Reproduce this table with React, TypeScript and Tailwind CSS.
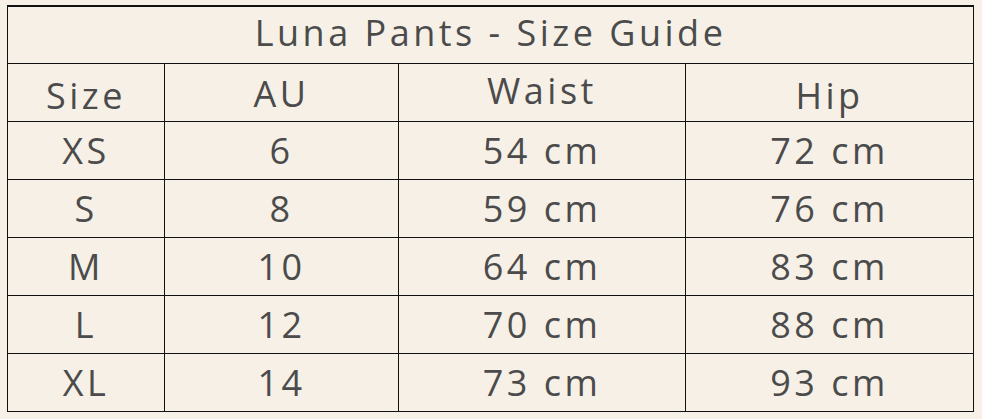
const rows = [
  ["XS", "6", "54 cm", "72 cm"],
  ["S", "8", "59 cm", "76 cm"],
  ["M", "10", "64 cm", "83 cm"],
  ["L", "12", "70 cm", "88 cm"],
  ["XL", "14", "73 cm", "93 cm"],
];

export default function App() {
  return (
    <div className="h-[419px] w-[982px] bg-[#f6f0e7] pl-[7px] pt-[5px] font-['Open_Sans',sans-serif] text-[36px] tracking-[3.5px] text-[#4b4b4b]">
      <table className="w-[966px] table-fixed border-collapse border-t-2 border-[#111]">
        <colgroup>
          <col className="w-[157px]" />
          <col className="w-[234px]" />
          <col className="w-[287px]" />
          <col className="w-[288px]" />
        </colgroup>
        <thead>
          <tr className="h-[57px]">
            <th
              colSpan={4}
              className="border border-t-2 border-[#111] p-0 pb-[3px] text-center font-normal leading-none"
            >
              Luna Pants - Size Guide
            </th>
          </tr>
          <tr className="h-[58px]">
            <th className="border border-[#111] p-0 pt-[7px] text-center font-normal leading-none">Size</th>
            <th className="border border-[#111] p-0 pt-[3px] text-center font-normal leading-none">AU</th>
            <th className="border border-[#111] p-0 pb-[3px] text-center font-normal leading-none">Waist</th>
            <th className="border border-[#111] p-0 pt-[7px] text-center font-normal leading-none">Hip</th>
          </tr>
        </thead>
        <tbody>
          {rows.map((r) => (
            <tr key={r[0]} className="h-[58px]">
              {r.map((c, i) => (
                <td key={i} className="border border-[#111] p-0 pt-[2px] text-center leading-none">
                  {c}
                </td>
              ))}
            </tr>
          ))}
        </tbody>
      </table>
    </div>
  );
}
